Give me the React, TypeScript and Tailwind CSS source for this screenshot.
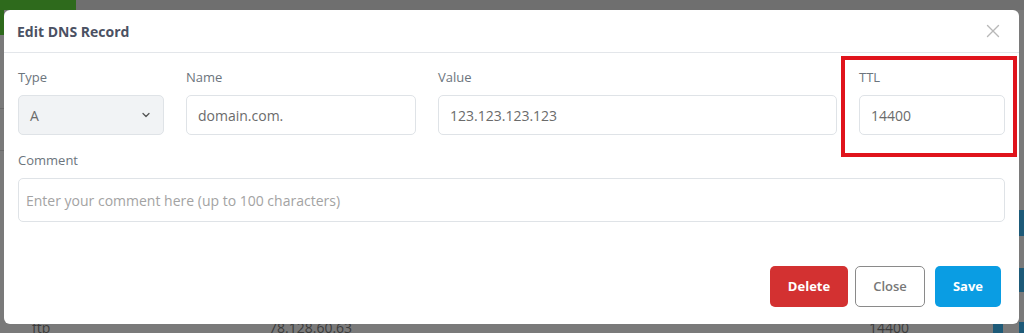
import React from 'react';
import { ChevronDown, X } from 'lucide-react';

const font = { fontFamily: '"Open Sans", "Liberation Sans", sans-serif' };

const Label = ({ children }: { children: React.ReactNode }) => (
  <label className="block h-[18px] text-[13px] leading-[18px] text-[#6c757d] mb-[9px]">{children}</label>
);

// base box for inputs, bg and padding set per field
const inputCls = 'w-full rounded-[5px] border border-[#dfe3e7] text-[14px] flex items-center';

export default function App() {
  return (
    <div className="relative h-[333px] w-[1024px] overflow-hidden bg-[#7a7a7a]" style={font}>
      {/* dimmed page behind the modal */}
      <div className="absolute left-0 top-0 h-[10px] w-full bg-[#6f6f6f]" />
      <div className="absolute left-0 top-0 h-[10px] w-[76px] bg-[#2e6a1c]" />
      <div className="absolute left-0 top-0 h-[35px] w-[4px] bg-[#2e6a1c]" />
      <div className="absolute left-0 top-[108px] h-px w-[4px] bg-[#6a6a6a]" />
      <div className="absolute left-0 top-[150px] h-px w-[4px] bg-[#6a6a6a]" />
      <div className="absolute right-0 top-[210px] h-[26px] w-[5px] bg-[#1d5a78]" />
      <div className="absolute right-0 top-[268px] h-[24px] w-[5px] bg-[#1d5a78]" />
      <div className="absolute right-0 top-[322px] h-[11px] w-[5px] bg-[#1d5a78]" />
      <div className="absolute left-[993px] top-[324px] h-[9px] w-[10px] bg-[#1d5a78]" />
      <span className="absolute left-[32px] top-[320px] text-[14px] leading-[16px] text-[#3c3c3c]">ftp</span>
      <span className="absolute left-[269px] top-[320px] text-[14px] leading-[16px] text-[#3c3c3c]">78.128.60.63</span>
      <span className="absolute left-[869px] top-[320px] text-[14px] leading-[16px] text-[#3c3c3c]">14400</span>

      <div className="pl-[4px] pt-[10px]">
        <div className="relative h-[314px] w-[1015px] rounded-[6px] bg-white flex flex-col">
          <div className="flex h-[43px] items-center justify-between border-b border-[#e3e6ea] pl-[13px] pr-[15px]">
            <h5 className="text-[14px] font-bold text-[#4b5163]">Edit DNS Record</h5>
            <X size={22} strokeWidth={1.5} className="text-[#b8b8b8]" />
          </div>

          <div className="px-[14px] pt-[15px]">
            <div className="grid grid-cols-[146px_230px_1fr_146px] gap-x-[22px]">
              <div>
                <Label>Type</Label>
                <div className={inputCls + ' h-[40px] justify-between bg-[#f1f3f5] px-[11px] text-[#6b6b6b]'}>
                  <span>A</span>
                  <ChevronDown size={12} strokeWidth={2.6} className="text-[#555]" />
                </div>
              </div>
              <div>
                <Label>Name</Label>
                <div className={inputCls + ' h-[40px] bg-white px-[11px] text-[#6b6b6b]'}>domain.com.</div>
              </div>
              <div>
                <Label>Value</Label>
                <div className={inputCls + ' h-[40px] bg-white px-[11px] text-[#6b6b6b]'}>123.123.123.123</div>
              </div>
              <div>
                <Label>TTL</Label>
                <div className={inputCls + ' h-[40px] bg-white px-[11px] text-[#6b6b6b]'}>14400</div>
              </div>
            </div>

            <div className="mt-[16px]">
              <Label>Comment</Label>
              <div className={inputCls + ' h-[44px] bg-white px-[7px] text-[#a3a3a3]'}>
                Enter your comment here (up to 100 characters)
              </div>
            </div>
          </div>

          <div className="mt-auto flex justify-end pb-[17px] pr-[18px]">
            <button className="h-[41px] w-[78px] rounded-[5px] bg-[#d33131] text-[13px] font-bold text-white">
              Delete
            </button>
            <button className="ml-[7px] h-[41px] w-[70px] rounded-[5px] border border-[#8a8a8a] bg-white text-[13px] font-semibold text-[#777]">
              Close
            </button>
            <button className="ml-[10px] h-[41px] w-[66px] rounded-[5px] bg-[#0a9de3] text-[13px] font-bold text-white">
              Save
            </button>
          </div>

          {/* highlight */}
          <div className="absolute left-[837px] top-[46px] h-[101px] w-[176px] border-[4px] border-[#e0141c]" />
        </div>
      </div>
    </div>
  );
}
